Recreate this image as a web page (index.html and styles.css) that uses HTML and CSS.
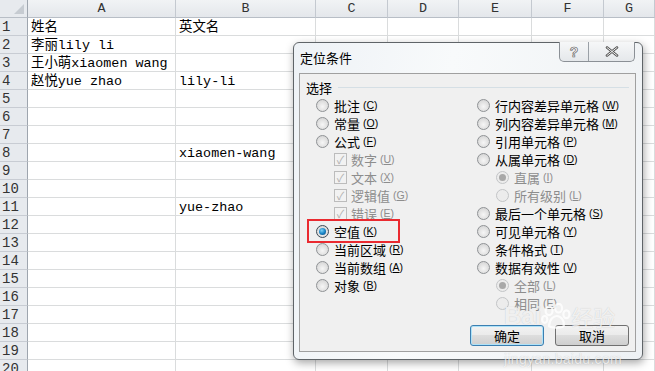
FILE: index.html
```html
<!DOCTYPE html>
<html lang="zh-CN">
<head>
  <meta charset="UTF-8">
  <title>定位条件</title>
  <link rel="stylesheet" href="styles.css">
</head>
<body>

  <div id="sheet" class="sheet"></div>

  <div class="dialog">
    <div class="titleBar">
      <span class="title">定位条件</span>
      <div class="capButtons">
        <span class="capBtn help">?</span>
        <span class="capBtn close">
          <svg width="14" height="11" viewBox="0 0 14 11"><path d="M2 1.5 L12 9.5 M12 1.5 L2 9.5" stroke="#555" stroke-width="2.6" stroke-linecap="round"/><path d="M2 1.5 L12 9.5 M12 1.5 L2 9.5" stroke="#fff" stroke-width="0.9" stroke-linecap="round"/></svg>
        </span>
      </div>
    </div>

    <div class="panel">
      <div class="groupHead"><span>选择</span><i></i></div>

      <div class="options">
        <div class="col">
          <div class="opt"><span class="radio"></span>批注 <u class="key">(<b>C</b>)</u></div>
          <div class="opt"><span class="radio"></span>常量 <u class="key">(<b>O</b>)</u></div>
          <div class="opt"><span class="radio"></span>公式 <u class="key">(<b>F</b>)</u></div>
          <div class="opt sub off"><span class="check">&#10003;</span>数字 <u class="key">(<b>U</b>)</u></div>
          <div class="opt sub off"><span class="check">&#10003;</span>文本 <u class="key">(<b>X</b>)</u></div>
          <div class="opt sub off"><span class="check">&#10003;</span>逻辑值 <u class="key">(<b>G</b>)</u></div>
          <div class="opt sub off"><span class="check">&#10003;</span>错误 <u class="key">(<b>E</b>)</u></div>
          <div class="opt"><span class="radio on"></span>空值 <u class="key">(<b>K</b>)</u></div>
          <div class="opt"><span class="radio"></span>当前区域 <u class="key">(<b>R</b>)</u></div>
          <div class="opt"><span class="radio"></span>当前数组 <u class="key">(<b>A</b>)</u></div>
          <div class="opt"><span class="radio"></span>对象 <u class="key">(<b>B</b>)</u></div>
        </div>
        <div class="col">
          <div class="opt"><span class="radio"></span>行内容差异单元格 <u class="key">(<b>W</b>)</u></div>
          <div class="opt"><span class="radio"></span>列内容差异单元格 <u class="key">(<b>M</b>)</u></div>
          <div class="opt"><span class="radio"></span>引用单元格 <u class="key">(<b>P</b>)</u></div>
          <div class="opt"><span class="radio"></span>从属单元格 <u class="key">(<b>D</b>)</u></div>
          <div class="opt rsub off"><span class="radio dim dot"></span>直属 <u class="key">(<b>I</b>)</u></div>
          <div class="opt rsub off"><span class="radio dim"></span>所有级别 <u class="key">(<b>L</b>)</u></div>
          <div class="opt"><span class="radio"></span>最后一个单元格 <u class="key">(<b>S</b>)</u></div>
          <div class="opt"><span class="radio"></span>可见单元格 <u class="key">(<b>Y</b>)</u></div>
          <div class="opt"><span class="radio"></span>条件格式 <u class="key">(<b>T</b>)</u></div>
          <div class="opt"><span class="radio"></span>数据有效性 <u class="key">(<b>V</b>)</u></div>
          <div class="opt rsub off"><span class="radio dim dot"></span>全部 <u class="key">(<b>L</b>)</u></div>
          <div class="opt rsub off"><span class="radio dim"></span>相同 <u class="key">(<b>E</b>)</u></div>
        </div>
      </div>

      <div class="actions">
        <button class="btn default">确定</button>
        <button class="btn">取消</button>
      </div>
    </div>

    <div class="mark"></div>

    <div class="watermark">
      <div class="wmTop">Bai<svg width="30" height="26" viewBox="0 0 34 30"><g fill="none" stroke="rgba(255,255,255,.8)" stroke-width="2.5"><ellipse cx="9" cy="9" rx="4" ry="5"/><ellipse cx="20" cy="6" rx="4" ry="5"/><ellipse cx="29" cy="13" rx="3.5" ry="4.5"/><ellipse cx="4" cy="19" rx="3" ry="4"/><path d="M9 27 C9 18 15 15 18 15 C23 15 27 21 26 26 C25 29 12 29 9 27 Z"/></g></svg><span class="wmCn">经验</span></div>
      <div class="wmUrl">jingyan.baidu.com</div>
    </div>
  </div>

  <script>
    const cols=['A','B','C','D','E','F','G'];
    const data={1:['姓名','英文名'],2:['李丽lily li',''],3:['王小萌xiaomen wang',''],4:['赵悦yue zhao','lily-li'],8:['','xiaomen-wang'],11:['','yue-zhao']};
    let html='<div class="hd corner"><span></span></div>';
    cols.forEach(c=>html+='<div class="hd colHd">'+c+'</div>');
    for(let r=1;r<=20;r++){
      html+='<div class="hd rowHd">'+r+'</div>';
      const row=data[r]||['',''];
      for(let i=0;i<cols.length;i++) html+='<div class="cell">'+(row[i]||'')+'</div>';
    }
    document.getElementById('sheet').innerHTML=html;
  </script>

</body>
</html>
```

FILE: styles.css
```css
body {
  margin: 0;
  padding: 0;
  background: #fff;
  width: 655px;
  height: 371px;
  overflow: hidden;
  position: relative;
  font-family: "Noto Sans CJK SC", sans-serif;
}

/* spreadsheet */
.sheet {
  display: grid;
  grid-template-columns: 28px 148px 140px 72px 71px 73px 72px 1fr;
  grid-auto-rows: 18px;
  font-family: "Liberation Mono", "Noto Sans CJK SC", monospace;
  font-size: 13.4px;
  color: #000;
}
.cell {
  border-right: 1px solid #dadcdd;
  border-bottom: 1px solid #dadcdd;
  line-height: 19px;
  padding-left: 3px;
  white-space: nowrap;
  overflow: visible;
}
.hd {
  background: #e7eaee;
  color: #333;
  border-right: 1px solid #c4c9d0;
  border-bottom: 1px solid #b8bec6;
  line-height: 18px;
  text-align: center;
}
.colHd {
  background: linear-gradient(#f1f3f5, #e4e7eb);
}
.rowHd {
  border-bottom-color: #c8ccd3;
  border-right-color: #9ea5ae;
  text-align: left;
  padding-left: 2px;
  font-size: 14px;
}
.corner {
  position: relative;
  border-right-color: #9ea5ae;
}
.corner span {
  position: absolute;
  right: 3px;
  bottom: 3px;
  width: 0;
  height: 0;
  border-left: 10px solid transparent;
  border-bottom: 10px solid #c6cbd1;
}

/* dialog */
.dialog {
  position: absolute;
  left: 293px;
  top: 42px;
  width: 350px;
  height: 318px;
  box-sizing: border-box;
  background: linear-gradient(100deg, #eef2f6 0%, #f8fafb 40%, #eef1f4 100%);
  border: 1px solid #5f6468;
  border-radius: 6px;
  box-shadow: 1px 3px 9px rgba(0,0,0,0.35);
  padding: 0 6px 7px 5px;
  display: flex;
  flex-direction: column;
}
.titleBar {
  height: 30px;
  display: flex;
  justify-content: space-between;
  align-items: flex-start;
}
.title {
  font-size: 13px;
  margin-top: 5px;
  margin-left: 1px;
  color: #000;
}
.capButtons {
  display: flex;
  margin-top: -1px;
  margin-right: 1px;
  border: 1px solid #8b9096;
  border-top: none;
  border-radius: 0 0 5px 5px;
  background: linear-gradient(#f6f7f8, #e5e8eb);
  overflow: hidden;
}
.capBtn {
  height: 19px;
  display: flex;
  align-items: center;
  justify-content: center;
}
.help {
  width: 28px;
  border-right: 1px solid #9aa0a6;
  font-family: "Liberation Sans", sans-serif;
  font-weight: bold;
  font-size: 14px;
  color: #fff;
  -webkit-text-stroke: 0.6px #555;
}
.close {
  width: 45px;
}
.panel {
  flex: 1;
  background: #f0f0f0;
  border: 1px solid #a0a0a0;
  display: flex;
  flex-direction: column;
  padding: 4px 6px 5px 6px;
  font-size: 13px;
}
.groupHead {
  display: flex;
  align-items: center;
  gap: 6px;
  height: 18px;
}
.groupHead i {
  flex: 1;
  height: 1px;
  background: #d5dfe5;
}
.options {
  display: grid;
  grid-template-columns: 161px 1fr;
  padding-left: 10px;
}
.opt {
  height: 18px;
  display: flex;
  align-items: center;
  white-space: nowrap;
  color: #000;
}
.opt.sub { padding-left: 18px; }
.opt.rsub { padding-left: 19px; }
.opt.off { color: #8d8d8d; }
.key {
  text-decoration: none;
  font-family: "Liberation Sans", sans-serif;
  font-size: 10.5px;
  margin-left: 3px;
}
.key b {
  font-weight: normal;
  text-decoration: underline;
}
.radio {
  width: 11px;
  height: 11px;
  border: 1px solid #8f9295;
  border-radius: 50%;
  background: radial-gradient(circle at 50% 60%, #f6f6f6 0%, #dadada 70%, #cfcfcf 100%);
  margin-right: 5px;
  position: relative;
  flex: none;
}
.radio.on::after,
.radio.dot::after {
  content: "";
  position: absolute;
  left: 2px;
  top: 2px;
  width: 7px;
  height: 7px;
  border-radius: 50%;
  background: radial-gradient(circle at 40% 35%, #7fd1f5 0%, #1a86c7 50%, #0b3e72 100%);
}
.radio.on {
  border-color: #3e4a55;
}
.radio.dim {
  border-color: #c3c5c7;
  background: #ececec;
}
.radio.dim.dot::after {
  background: #a8a8a8;
}
.check {
  width: 11px;
  height: 11px;
  border: 1px solid #bcbcbc;
  background: #f2f2f2;
  margin-right: 4px;
  font-size: 11px;
  line-height: 11px;
  text-align: center;
  color: #b0b0b0;
  flex: none;
}
.actions {
  margin-top: auto;
  display: flex;
  justify-content: flex-end;
  gap: 11px;
}
.btn {
  width: 74px;
  height: 21px;
  font-family: "Noto Sans CJK SC", sans-serif;
  font-size: 13px;
  padding: 0;
  border: 1px solid #707070;
  border-radius: 3px;
  background: linear-gradient(#f2f2f2 0%, #ebebeb 45%, #dddddd 50%, #cfcfcf 100%);
  color: #000;
}
.btn.default {
  border-color: #3c7fb1;
  box-shadow: inset 0 0 0 1px #aee2f8;
}

/* annotation */
.mark {
  position: absolute;
  left: 13px;
  top: 176px;
  width: 89px;
  height: 20px;
  border: 2px solid #ea2a30;
}

.watermark {
  position: absolute;
  left: 210px;
  top: 258px;
  width: 140px;
  color: rgba(255,255,255,0.75);
  text-shadow: 0 0 1px rgba(0,0,0,0.2);
  font-family: "Liberation Sans", sans-serif;
  pointer-events: none;
}
.wmTop {
  display: flex;
  align-items: center;
  font-size: 24px;
  font-weight: bold;
  height: 30px;
}
.wmCn {
  font-family: "Noto Sans CJK SC", sans-serif;
  font-weight: normal;
  font-size: 22px;
}
.wmUrl {
  font-size: 14px;
  margin-top: 20px;
  letter-spacing: 0.3px;
}
```
